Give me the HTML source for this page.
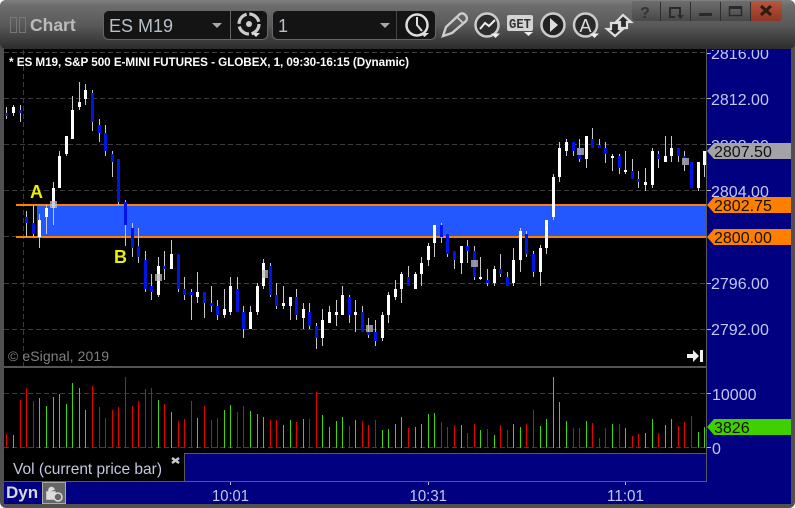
<!DOCTYPE html>
<html><head><meta charset="utf-8"><style>
html,body{margin:0;padding:0;background:#fff;width:795px;height:508px;overflow:hidden}
svg{display:block}
text{font-family:"Liberation Sans",sans-serif}
.c path{shape-rendering:crispEdges}
</style></head><body>
<svg width="795" height="508" viewBox="0 0 795 508" xmlns="http://www.w3.org/2000/svg">
<defs>
<linearGradient id="hd" x1="0" y1="0" x2="0" y2="1"><stop offset="0" stop-color="#808080"/><stop offset=".1" stop-color="#6e6e6e"/><stop offset=".5" stop-color="#5a5a5a"/><stop offset="1" stop-color="#2c2c2c"/></linearGradient>
<linearGradient id="bt" x1="0" y1="0" x2="0" y2="1"><stop offset="0" stop-color="#6e6e6e"/><stop offset="1" stop-color="#484848"/></linearGradient>
<linearGradient id="cl" x1="0" y1="0" x2="0" y2="1"><stop offset="0" stop-color="#bb563e"/><stop offset="1" stop-color="#8f3523"/></linearGradient>
<clipPath id="ax"><rect x="707" y="50" width="84" height="404"/></clipPath>
</defs>
<rect x="0" y="0" width="795" height="508" fill="#505050" rx="6"/>
<rect x="0" y="0" width="795" height="49" fill="url(#hd)" rx="6"/>
<rect x="4" y="49" width="703" height="318" fill="#000"/>
<rect x="707" y="49" width="84" height="455" fill="#000080"/>
<rect x="4" y="368" width="703" height="85" fill="#000"/>
<rect x="4" y="453" width="180" height="28" fill="#000"/>
<rect x="184" y="454" width="522" height="27" fill="#000080"/>
<rect x="4" y="482" width="703" height="22" fill="#000080"/>
<g class="c">
<path d="M4 366.500H707M4 367.500H707" stroke="#555"/>
<path d="M184 453.500H707M184.500 453V481M4 481.500H707M706.500 49V482" stroke="#5a5a5a" fill="none"/>
<path d="M707 53.500H711M707 98.500H711M707 144.500H711M707 190.500H711M707 283.500H711M707 329.500H711M707 393.500H711M707 447.500H711M230.500 482V485M428.500 482V485M625.500 482V485" stroke="#b8b8d0"/>

<!-- grid -->
<path d="M4 52.500H706M4 98.500H706M4 144.500H706M4 190.500H706M4 236.500H706M4 283.500H706M4 329.500H706M4 393.500H706M4 447.500H706M23.500 50V366" stroke="#3c3c3c" stroke-dasharray="5 3" fill="none"/>
</g>

<!-- band -->
<rect x="37" y="206" width="669" height="30" fill="#2357ff"/>
<rect x="16" y="204" width="690" height="2" fill="#ff8000"/>
<rect x="16" y="236" width="690" height="2" fill="#ff8000"/>

<g class="c">
<!-- wicks -->
<path stroke="#c8c8c8" fill="none" d="M6.500 107V119M13.500 105V116M20.500 105V122M26.500 211V237M33.500 205V237M39.500 214V248M46.500 205V234M53.500 182V225M59.500 151V188M66.500 136V156M72.500 96V139M79.500 82V110M85.500 84V105M92.500 90V131M99.500 119V142M105.500 125V156M112.500 151V177M118.500 159V205M125.500 200V246M132.500 223V257M138.500 228V263M145.500 251V292M151.500 274V300M158.500 257V297M164.500 251V280M171.500 240V269M178.500 254V292M184.500 277V300M191.500 289V320M197.500 272V303M204.500 292V318M211.500 286V312M217.500 300V320M224.500 289V318M230.500 277V315M237.500 277V312M243.500 306V338M250.500 306V329M257.500 283V315M263.500 259V289M270.500 263V297M276.500 283V309M283.500 286V309M290.500 297V320M296.500 289V320M303.500 303V329M309.500 303V329M316.500 323V349M322.500 309V346M329.500 306V323M336.500 300V326M342.500 286V315M349.500 295V323M355.500 300V332M362.500 306V332M368.500 318V338M375.500 320V346M382.500 312V341M388.500 292V323M395.500 280V300M401.500 272V303M408.500 266V286M415.500 272V289M421.500 257V286M428.500 243V266M434.500 225V257M441.500 223V243M447.500 234V257M454.500 251V269M461.500 246V274M467.500 240V263M474.500 246V280M480.500 257V280M487.500 269V286M494.500 266V286M500.500 254V277M507.500 272V286M513.500 248V286M520.500 228V272M526.500 231V257M533.500 251V277M540.500 245V286M546.500 220V254M553.500 174V220M559.500 142V182M566.500 139V156M573.500 142V156M579.500 139V162M586.500 136V168M592.500 128V148M599.500 139V148M605.500 142V163M612.500 154V171M619.500 154V174M625.500 151V174M632.500 159V179M638.500 171V188M645.500 168V191M652.500 148V188M658.500 151V168M665.500 136V162M671.500 136V162M678.500 148V162M684.500 151V171M691.500 162V188M698.500 162V191M704.500 151V177"/>
<!-- blue bodies -->
<path stroke="#0014e6" stroke-width="3" fill="none" d="M6.500 113V116M20.500 110V113M26.500 217V223M33.500 223V234M92.500 93V122M99.500 125V133M105.500 133V151M112.500 154V162M118.500 159V202M125.500 202V225M132.500 228V248M138.500 246V257M145.500 260V289M151.500 286V292M164.500 266V269M178.500 254V289M184.500 289V295M191.500 292V295M204.500 292V303M211.500 303V306M217.500 306V315M237.500 289V312M243.500 312V329M270.500 266V295M276.500 295V306M296.500 297V315M309.500 312V326M316.500 326V338M349.500 297V315M362.500 312V332M368.500 332V335M375.500 332V341M408.500 277V286M441.500 225V237M447.500 234V254M454.500 251V260M467.500 246V251M474.500 251V277M487.500 280V283M500.500 269V274M507.500 277V286M526.500 234V254M533.500 254V272M573.500 142V151M579.500 148V159M592.500 139V148M599.500 145V148M605.500 148V154M619.500 156V168M632.500 171V179M638.500 179V182M658.500 154V159M678.500 148V156M684.500 156V165M691.500 162V188"/>
<!-- white bodies -->
<path stroke="#fff" stroke-width="3" fill="none" d="M13.500 107V113M39.500 220V237M46.500 208V217M53.500 188V208M59.500 156V188M66.500 136V154M72.500 110V139M79.500 102V107M85.500 90V99M158.500 266V295M171.500 254V269M197.500 292V297M224.500 309V315M230.500 286V312M250.500 312V329M257.500 286V312M263.500 263V286M283.500 303V306M290.500 297V306M303.500 309V318M322.500 320V338M329.500 312V323M336.500 312V315M342.500 295V315M355.500 312V315M382.500 315V338M388.500 295V315M395.500 289V297M401.500 274V289M415.500 274V289M421.500 263V274M428.500 246V260M434.500 225V243M461.500 246V263M480.500 277V279M494.500 269V283M513.500 260V283M520.500 231V260M540.500 248V272M546.500 220V248M553.500 177V217M559.500 148V177M566.500 142V151M586.500 136V159M612.500 156V158M625.500 170V172M645.500 182V185M652.500 151V185M665.500 156V162M671.500 148V156M698.500 162V188M704.500 151V165"/>
</g>
<!-- grey markers -->
<g fill="#bdbdbd" fill-opacity=".75">
<rect x="50" y="201" width="7" height="7"/><rect x="155" y="274" width="7" height="7"/><rect x="262" y="270" width="6" height="8"/><rect x="366" y="325" width="7" height="7"/><rect x="471" y="260" width="7" height="7"/><rect x="577" y="148" width="7" height="7"/><rect x="682" y="158" width="7" height="7"/>
</g>

<!-- volume -->
<g class="c">
<path stroke="#e60000" fill="none" d="M6.500 434V448M20.500 400V448M26.500 388V448M33.500 401V448M92.500 386V448M99.500 407V448M105.500 418V448M112.500 410V448M118.500 407V448M125.500 377V448M132.500 406V448M138.500 401V448M145.500 389V448M151.500 388V448M164.500 404V448M178.500 421V448M184.500 419V448M191.500 401V448M204.500 406V448M211.500 420V448M217.500 418V448M237.500 412V448M243.500 406V448M270.500 420V448M276.500 420V448M296.500 422V448M309.500 419V448M316.500 392V448M349.500 426V448M362.500 421V448M368.500 425V448M375.500 420V448M408.500 428V448M441.500 422V448M447.500 427V448M454.500 425V448M467.500 433V448M474.500 424V448M487.500 429V448M500.500 425V448M507.500 430V448M526.500 424V448M533.500 410V448M573.500 428V448M579.500 428V448M592.500 423V448M599.500 438V448M605.500 428V448M619.500 424V448M632.500 436V448M638.500 434V448M658.500 433V448M678.500 426V448M684.500 422V448M691.500 416V448"/>
<path stroke="#40d800" fill="none" d="M13.500 435V448M39.500 398V448M46.500 406V448M53.500 397V448M59.500 394V448M66.500 404V448M72.500 383V448M79.500 388V448M85.500 410V448M158.500 400V448M171.500 412V448M197.500 418V448M224.500 410V448M230.500 405V448M250.500 411V448M257.500 414V448M263.500 417V448M283.500 425V448M290.500 420V448M303.500 419V448M322.500 415V448M329.500 427V448M336.500 421V448M342.500 417V448M355.500 420V448M382.500 430V448M388.500 429V448M395.500 424V448M401.500 417V448M415.500 427V448M421.500 424V448M428.500 414V448M434.500 413V448M461.500 425V448M480.500 430V448M494.500 435V448M513.500 424V448M520.500 427V448M540.500 426V448M546.500 419V448M553.500 377V448M559.500 402V448M566.500 421V448M586.500 421V448M612.500 424V448M625.500 428V448M645.500 433V448M652.500 419V448M665.500 425V448M671.500 419V448M698.500 432V448M704.500 427V448"/>
</g>

<!-- title/labels in chart -->
<text x="9" y="66" font-size="11.700" font-weight="700" fill="#fff" textLength="400" lengthAdjust="spacing">* ES M19, S&amp;P 500 E-MINI FUTURES - GLOBEX, 1, 09:30-16:15 (Dynamic)</text>
<text x="30" y="198" font-size="18" font-weight="700" fill="#eaf000">A</text>
<text x="114" y="263" font-size="18" font-weight="700" fill="#eaf000">B</text>
<text x="8" y="361" font-size="14" fill="#808080" textLength="101" lengthAdjust="spacing">© eSignal, 2019</text>
<path d="M687 354h6v-4l6 6-6 6v-4h-6zM700 350h3v12h-3z" fill="#eee"/>

<!-- axis text -->
<g font-size="16" fill="#c4c8f0" clip-path="url(#ax)">
<text x="711" y="59">2816.00</text>
<text x="711" y="105">2812.00</text>
<text x="711" y="151">2808.00</text>
<text x="711" y="197">2804.00</text>
<text x="711" y="289">2796.00</text>
<text x="711" y="335">2792.00</text>
<text x="712" y="400">10000</text>
<text x="712" y="454">0</text>
</g>
<path d="M707 151l7-8h77v16h-77z" fill="#a3a2a6"/>
<path d="M707 205l7-8h77v16h-77z" fill="#ff8000"/>
<path d="M707 237l7-8h77v16h-77z" fill="#ff8000"/>
<path d="M707 427l7-8h77v16h-77z" fill="#40d000"/>
<g font-size="16" fill="#111">
<text x="714" y="157">2807.50</text>
<text x="714" y="211">2802.75</text>
<text x="714" y="243">2800.00</text>
<text x="714" y="433">3826</text>
</g>

<!-- bottom -->
<text x="13" y="474" font-size="16" fill="#c4c8e0" textLength="149" lengthAdjust="spacingAndGlyphs">Vol (current price bar)</text>
<path d="M172 458l7 5M179 458l-7 5" stroke="#c8c8c8" stroke-width="2.500"/>
<text x="6" y="498" font-size="17" font-weight="700" fill="#d8d8e0">Dyn</text>
<rect x="42.500" y="482.500" width="23" height="21" fill="#666" stroke="#aaa"/>
<path d="M47 499v-7h8v7zM49 492v-2a2.500 2.500 0 0 1 5 0" fill="#ddd" stroke="#ddd" stroke-width="1.500"/>
<circle cx="58" cy="497" r="4" fill="#666" stroke="#ddd" stroke-width="1.500"/>
<g font-size="16" fill="#c4c8f0">
<text x="212" y="501" textLength="37" lengthAdjust="spacingAndGlyphs">10:01</text>
<text x="409.500" y="501" textLength="37.500" lengthAdjust="spacingAndGlyphs">10:31</text>
<text x="607" y="501" textLength="37" lengthAdjust="spacingAndGlyphs">11:01</text>
</g>

<!-- header left -->
<rect x="10.500" y="17.500" width="6" height="15" fill="none" stroke="#777"/>
<rect x="19.500" y="17.500" width="6" height="15" fill="none" stroke="#777"/>
<text x="30" y="31" font-size="17.500" font-weight="700" fill="#bbb">Chart</text>

<!-- dropdowns -->
<rect x="103.500" y="10.500" width="164" height="29" rx="5" fill="#141414" stroke="#666"/>
<path d="M230.500 11V39" stroke="#666"/>
<text x="109" y="32" font-size="18" fill="#b8c0c8">ES M19</text>
<path d="M212 23h10l-5 5z" fill="#aaa"/>
<circle cx="249" cy="24" r="10" fill="none" stroke="#ccc" stroke-width="3.200" stroke-dasharray="13 2.700"/>
<circle cx="249" cy="24" r="3" fill="#ccc"/>
<path d="M252 33h8l-4 4z" fill="#ddd"/>

<rect x="272.500" y="10.500" width="163" height="29" rx="5" fill="#141414" stroke="#666"/>
<path d="M396.500 11V39" stroke="#444"/>
<text x="278" y="32" font-size="18" fill="#b8c0c8">1</text>
<path d="M380 23h10l-5 5z" fill="#aaa"/>
<circle cx="417" cy="25" r="10.500" fill="none" stroke="#ddd" stroke-width="2.500"/>
<path d="M417 17V25L422 31" fill="none" stroke="#ddd" stroke-width="2"/>
<path d="M420 33h9l-4.500 4z" fill="#ddd"/>

<!-- toolbar icons -->
<path d="M443 36L446 27L460 14Q462.500 12.500 465 14.500L466.500 16.500Q467.500 19 466 21L452 33Z" fill="none" stroke="#ccc" stroke-width="2.400"/>
<path d="M457 17L463 23" stroke="#ccc" stroke-width="1.800"/>
<circle cx="487" cy="25" r="11.500" fill="#2e2e2e" stroke="#ccc" stroke-width="2.500"/>
<path d="M480 29L485 23L489 26L495 20" fill="none" stroke="#eee" stroke-width="2"/>
<path d="M491 33.500h9l-4.500 4.500z" fill="#eee"/>
<rect x="507" y="15" width="26" height="16" rx="2" fill="#d4d4d4"/>
<text x="520" y="28" font-size="14" font-weight="700" fill="#333" text-anchor="middle" style="font-family:'Liberation Mono',monospace" textLength="22" lengthAdjust="spacingAndGlyphs">GET</text>
<path d="M524 32h9l-4.500 4z" fill="#eee"/>
<circle cx="553" cy="25" r="11.500" fill="#222" stroke="#ccc" stroke-width="2.500"/>
<path d="M550 18L558 25L550 32Z" fill="#ddd"/>
<circle cx="585.500" cy="25" r="11.500" fill="#2a2a2a" stroke="#ccc" stroke-width="2.500"/>
<text x="585.500" y="32" font-size="18" fill="#ddd" text-anchor="middle">A</text>
<path d="M590 33.500h9l-4.500 4.500z" fill="#eee"/>
<path d="M623 15L631 22H627V28H620V22H616Z" fill="#2a2a2a" stroke="#ddd" stroke-width="2.200"/>
<path d="M615 36L607 29H611V23H619V29H623Z" fill="#2a2a2a" stroke="#ddd" stroke-width="2.200"/>

<!-- window buttons -->
<path d="M632 1H752V21H636Q632 21 632 17Z" fill="url(#bt)"/>
<path d="M751 1H782V17Q782 21 778 21H751Z" fill="url(#cl)"/>
<path d="M660.500 2V21M690.500 2V21M720.500 2V21M750.500 2V21" stroke="#2e2e2e"/>
<text x="645" y="18" font-size="16" font-weight="700" fill="#333" text-anchor="middle">?</text>
<path d="M680 17V8H670V17H675" fill="none" stroke="#2a2a2a" stroke-width="2"/>
<path d="M677 15h7l-3.500 4z" fill="#2a2a2a"/>
<rect x="699" y="13" width="13" height="3" fill="#2a2a2a"/>
<rect x="729.500" y="7.500" width="12" height="8" fill="none" stroke="#2a2a2a" stroke-width="1.500"/>
<path d="M729 7.500h13" stroke="#2a2a2a" stroke-width="3"/>
<path d="M761 6L771 15M771 6L761 15" stroke="#2e1a14" stroke-width="3"/>
</svg>
</body></html>
